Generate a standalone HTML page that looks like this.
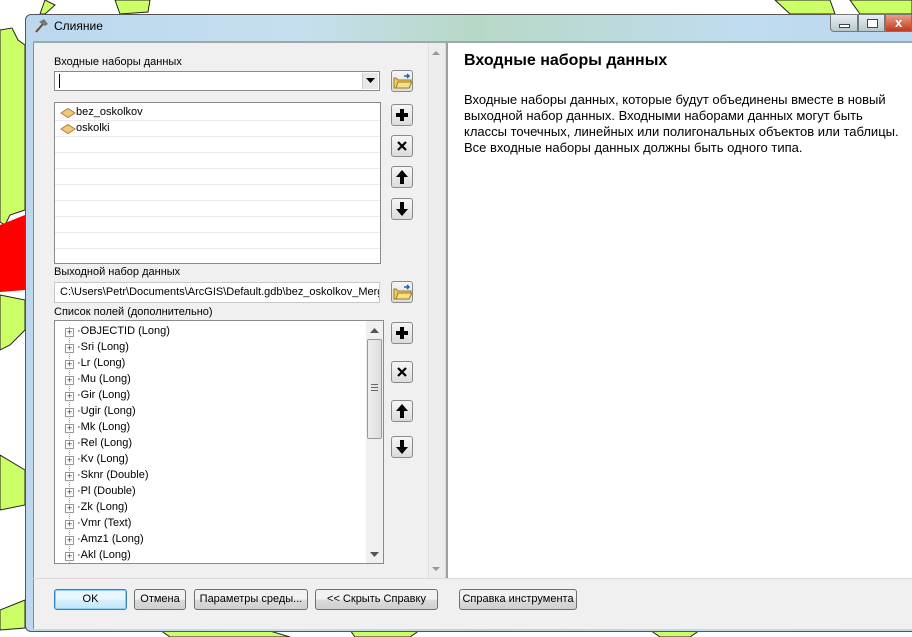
<!DOCTYPE html>
<html><head><meta charset="utf-8"><style>
*{margin:0;padding:0;box-sizing:border-box}
body{width:912px;height:637px;overflow:hidden;background:#fff;position:relative;font-family:"Liberation Sans","DejaVu Sans",sans-serif;font-size:11px;color:#000}
.a{position:absolute}
.btn{position:absolute;width:22px;height:22px;border:1px solid #8a8a8a;border-radius:3px;background:linear-gradient(#f6f6f6,#dcdcdc);display:flex;align-items:center;justify-content:center}
.pb{position:absolute;height:21px;top:589px;border:1px solid #707070;border-radius:3px;background:linear-gradient(#f2f2f2 50%,#dcdcdc 50%,#cfcfcf);text-align:center;line-height:19px;font-size:11px}
.row{position:absolute;left:0;right:0;height:16px;border-bottom:1px solid #eaeaea}
.fi{position:absolute;left:10px;height:16px;line-height:16px;white-space:nowrap}
.fi i{display:inline-block;width:9px;height:9px;border:1px solid #999;vertical-align:-1px;margin-right:3px;font-style:normal;font-size:9px;line-height:7px;text-align:center;color:#333;background:#fff}
</style></head><body>
<svg class="a" style="left:0;top:0" width="912" height="637">
<path d="M0 30 L12 28 L18 40 L25 45 L25 210 L10 215 L5 225 L0 222 Z" fill="#ccff66" stroke="#222" stroke-width="1"/>
<path d="M0 225 L25 215 L25 290 L0 292 Z" fill="#ff0000"/>
<path d="M0 295 L25 300 L25 330 L10 345 L0 350 Z" fill="#ccff66" stroke="#222"/>
<path d="M0 455 L25 470 L25 505 L0 510 Z" fill="#ccff66" stroke="#222"/>
<path d="M0 610 L25 600 L25 628 L0 630 Z" fill="#ccff66" stroke="#222"/>
<path d="M45 0 L55 5 L45 14 L40 14 Z" fill="#ccff66" stroke="#222"/>
<path d="M115 0 L150 0 L148 12 L120 14 Z" fill="#ccff66" stroke="#222"/>
<path d="M775 0 L790 14 L835 14 L830 0 Z" fill="#ccff66" stroke="#222"/>
<path d="M850 0 L912 0 L912 14 L860 14 Z" fill="#ccff66" stroke="#222"/>
<path d="M160 630 L260 628 L290 637 L170 637 Z" fill="#ccff66" stroke="#222"/>
<path d="M350 630 L420 630 L410 637 L355 637 Z" fill="#ccff66" stroke="#222"/>
<path d="M650 630 L700 630 L690 637 L660 637 Z" fill="#ccff66" stroke="#222"/>
</svg>
<div class="a" style="left:25px;top:14px;width:900px;height:618px;border:1px solid #555;border-radius:6px;background:linear-gradient(90deg,#bcd7ee,#c6dfef 30%,#b8d8c6 50%,#c0dcf0 80%,#bcd7ee)"></div>
<div class="a" style="left:33px;top:41px;width:879px;height:2px;background:#9aa"></div>
<div class="a" style="left:54px;top:19px;font-size:12px;color:#000">Слияние</div>
<svg class="a" style="left:33px;top:18px" width="16" height="16"><path d="M3 14 L10 6" stroke="#6b4a2a" stroke-width="2"/><path d="M6 4 L11 1 L15 6 L12 8 Z" fill="#777"/></svg>
<div class="a" style="left:830px;top:14px;width:28px;height:18px;border:1px solid #777;border-radius:0 0 0 4px;background:linear-gradient(#e8f0f4,#b6c8cc)"><div class="a" style="left:8px;top:9px;width:11px;height:4px;border:1px solid #444;background:#fff"></div></div>
<div class="a" style="left:858px;top:14px;width:27px;height:18px;border:1px solid #777;background:linear-gradient(#e8f0f4,#b6c8cc)"><div class="a" style="left:8px;top:4px;width:11px;height:9px;border:1px solid #444;background:#fff"></div></div>
<div class="a" style="left:885px;top:14px;width:27px;height:18px;border:1px solid #777;background:linear-gradient(#e9a08a,#c0391b);color:#fff;font-weight:bold;font-size:13px;padding-left:9px;line-height:16px">x</div>
<div class="a" style="left:33px;top:43px;width:879px;height:586px;background:#f0f0f0;border-left:1px solid #8a8a8a"></div>
<div class="a" style="left:428px;top:43px;width:17px;height:535px;background:#ededed;border-left:1px solid #e0e0e0"></div>
<svg class="a" style="left:431px;top:50px" width="10" height="6"><path d="M1 5 L5 1 L9 5Z" fill="#999"/></svg>
<svg class="a" style="left:431px;top:566px" width="10" height="6"><path d="M1 1 L5 5 L9 1Z" fill="#999"/></svg>
<div class="a" style="left:445px;top:43px;width:3px;height:535px;background:#a0a0a0;border-left:1px solid #dcdcdc"></div>
<div class="a" style="left:448px;top:43px;width:464px;height:535px;background:#fff"></div>
<div class="a" style="left:464px;top:52px;font-size:16px;font-weight:bold">Входные наборы данных</div>
<div class="a" style="left:464px;top:92px;font-size:13px;line-height:16px;white-space:nowrap">Входные наборы данных, которые будут объединены вместе в новый<br>выходной набор данных. Входными наборами данных могут быть<br>классы точечных, линейных или полигональных объектов или таблицы.<br>Все входные наборы данных должны быть одного типа.</div>
<div class="a" style="left:33px;top:578px;width:879px;height:1px;background:#d8d8d8"></div>
<div class="a" style="left:54px;top:56px">Входные наборы данных</div>
<div class="a" style="left:54px;top:71px;width:326px;height:20px;border:1px solid #8a8a8a;background:#fff"><div class="a" style="left:4px;top:2px;width:1px;height:14px;background:#000"></div><div class="a" style="right:1px;top:1px;width:16px;height:16px;background:#e8e8e8;border-left:1px solid #ccc"></div><svg class="a" style="right:4px;top:6px" width="9" height="6"><path d="M0 0 L9 0 L4.5 5Z" fill="#000"/></svg></div>
<div class="a" style="left:54px;top:102px;width:327px;height:162px;border:1px solid #8a8a8a;background:#fff;overflow:hidden">
<div class="row" style="top:2px"></div><div class="row" style="top:18px"></div><div class="row" style="top:34px"></div><div class="row" style="top:50px"></div><div class="row" style="top:66px"></div><div class="row" style="top:82px"></div><div class="row" style="top:98px"></div><div class="row" style="top:114px"></div><div class="row" style="top:130px"></div>
<svg class="a" style="left:5px;top:5px" width="16" height="10"><path d="M1 5 L8 0.5 L15 5 L8 9.5Z" fill="#f0c878" stroke="#b08040"/></svg>
<div class="a" style="left:21px;top:3px">bez_oskolkov</div>
<svg class="a" style="left:5px;top:21px" width="16" height="10"><path d="M1 5 L8 0.5 L15 5 L8 9.5Z" fill="#f0c878" stroke="#b08040"/></svg>
<div class="a" style="left:21px;top:19px">oskolki</div>
</div>
<div class="a" style="left:54px;top:266px">Выходной набор данных</div>
<div class="a" style="left:54px;top:282px;width:326px;height:21px;border:1px solid #c8c8c8;background:#fff;padding:3px 0 0 5px;white-space:nowrap;overflow:hidden">C:\Users\Petr\Documents\ArcGIS\Default.gdb\bez_oskolkov_Merg</div>
<div class="a" style="left:54px;top:306px">Список полей (дополнительно)</div>
<div class="a" style="left:54px;top:320px;width:330px;height:244px;border:1px solid #8a8a8a;background:#fff;overflow:hidden">
<div class="a" style="left:14px;top:6px;width:1px;height:240px;border-left:1px dotted #999"></div>
<div class="fi" style="top:2px"><i>+</i>·OBJECTID (Long)</div>
<div class="fi" style="top:18px"><i>+</i>·Sri (Long)</div>
<div class="fi" style="top:34px"><i>+</i>·Lr (Long)</div>
<div class="fi" style="top:50px"><i>+</i>·Mu (Long)</div>
<div class="fi" style="top:66px"><i>+</i>·Gir (Long)</div>
<div class="fi" style="top:82px"><i>+</i>·Ugir (Long)</div>
<div class="fi" style="top:98px"><i>+</i>·Mk (Long)</div>
<div class="fi" style="top:114px"><i>+</i>·Rel (Long)</div>
<div class="fi" style="top:130px"><i>+</i>·Kv (Long)</div>
<div class="fi" style="top:146px"><i>+</i>·Sknr (Double)</div>
<div class="fi" style="top:162px"><i>+</i>·Pl (Double)</div>
<div class="fi" style="top:178px"><i>+</i>·Zk (Long)</div>
<div class="fi" style="top:194px"><i>+</i>·Vmr (Text)</div>
<div class="fi" style="top:210px"><i>+</i>·Amz1 (Long)</div>
<div class="fi" style="top:226px"><i>+</i>·Akl (Long)</div>
<div class="a" style="left:311px;top:0;width:17px;height:242px;background:#f0f0f0"></div>
<svg class="a" style="left:315px;top:7px" width="9" height="5"><path d="M0 5 L4.5 0 L9 5Z" fill="#555"/></svg>
<svg class="a" style="left:315px;top:231px" width="9" height="5"><path d="M0 0 L4.5 5 L9 0Z" fill="#555"/></svg>
<div class="a" style="left:312px;top:18px;width:15px;height:100px;border:1px solid #999;border-radius:2px;background:linear-gradient(90deg,#eee,#ddd)"></div>
<div class="a" style="left:316px;top:63px;width:7px;height:7px;border-top:1px solid #666;border-bottom:1px solid #666"><div style="margin-top:2px;border-top:1px solid #666"></div></div>
</div>
<svg width="0" height="0" style="position:absolute"><defs>
<g id="fold"><path d="M2 7 L2 17 L17 17 L19 9 L6 9 L4 7Z" fill="#f0cf5a" stroke="#9a7a20"/><path d="M4 17 L6 11 L20 11 L17 17Z" fill="#f8e08a" stroke="#9a7a20"/><path d="M12 5 L17 5 M15 3 L17 5 L15 7" stroke="#2060c0" stroke-width="1.5" fill="none"/></g>
<path id="plus" d="M6 2h4v4h4v4h-4v4h-4v-4h-4v-4h4z" fill="#000"/>
<path id="x" d="M4 4 L12 12 M12 4 L4 12" stroke="#000" stroke-width="2.2"/>
<path id="up" d="M8 1 L14 8 L10 8 L10 15 L6 15 L6 8 L2 8Z" fill="#000"/>
<path id="dn" d="M8 15 L14 8 L10 8 L10 1 L6 1 L6 8 L2 8Z" fill="#000"/>
</defs></svg>
<div class="btn" style="left:391px;top:70px"><svg width="20" height="20"><use href="#fold"/></svg></div>
<div class="btn" style="left:391px;top:104px"><svg width="16" height="16"><use href="#plus"/></svg></div>
<div class="btn" style="left:391px;top:135px"><svg width="16" height="16"><use href="#x"/></svg></div>
<div class="btn" style="left:391px;top:166px"><svg width="16" height="16"><use href="#up"/></svg></div>
<div class="btn" style="left:391px;top:198px"><svg width="16" height="16"><use href="#dn"/></svg></div>
<div class="btn" style="left:391px;top:281px"><svg width="20" height="20"><use href="#fold"/></svg></div>
<div class="btn" style="left:391px;top:322px"><svg width="16" height="16"><use href="#plus"/></svg></div>
<div class="btn" style="left:391px;top:361px"><svg width="16" height="16"><use href="#x"/></svg></div>
<div class="btn" style="left:391px;top:400px"><svg width="16" height="16"><use href="#up"/></svg></div>
<div class="btn" style="left:391px;top:436px"><svg width="16" height="16"><use href="#dn"/></svg></div>
<div class="pb" style="left:54px;width:73px;border-color:#3c7fb1;box-shadow:inset 0 0 0 1px #8ed0f5;background:linear-gradient(#eaf6fd 50%,#d9f0fc 50%,#bee6fd)">OK</div>
<div class="pb" style="left:134px;width:52px">Отмена</div>
<div class="pb" style="left:194px;width:114px">Параметры среды...</div>
<div class="pb" style="left:315px;width:123px">&lt;&lt; Скрыть Справку</div>
<div class="pb" style="left:459px;width:118px">Справка инструмента</div>
</body></html>
